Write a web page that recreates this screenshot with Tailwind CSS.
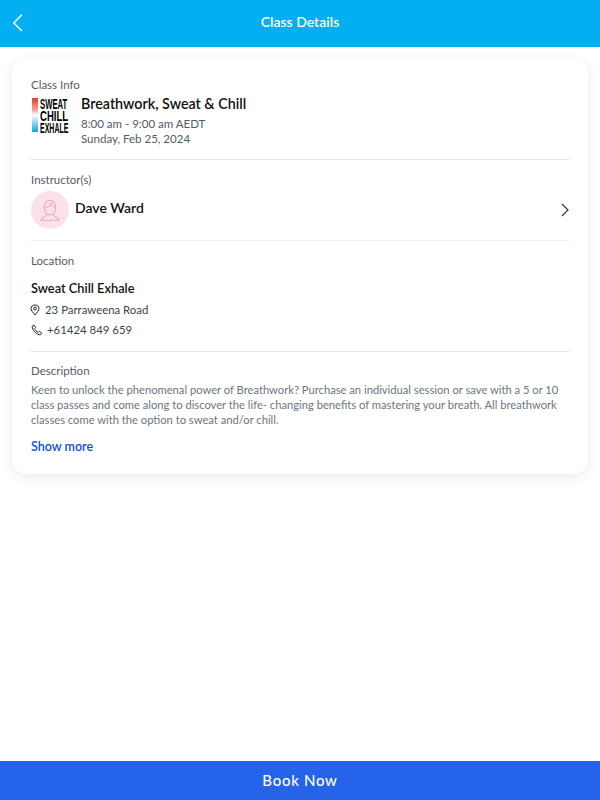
<!DOCTYPE html>
<html lang="en">
  <head>
    <meta charset="UTF-8" />
    <meta name="viewport" content="width=device-width, initial-scale=1.0" />
    <title>Class Details</title>
    <script src="https://cdn.jsdelivr.net/npm/@tailwindcss/browser@4"></script>
  </head>
  <body class="bg-white font-['Lato','Noto_Sans',sans-serif]">
    <div class="flex flex-col h-[800px] w-[600px] overflow-hidden">
      <!-- header -->
      <header class="h-[47px] shrink-0 bg-[#03aff0] flex items-center relative justify-center">
        <svg class="absolute left-[11px] top-[13px]" width="14" height="20" viewBox="0 0 14 20" fill="none" stroke="#fff" stroke-width="1.6" stroke-linecap="round" stroke-linejoin="round">
          <path d="M10.5 2 L2.8 10 L10.5 17.5" />
        </svg>
        <span class="text-white text-[14px] font-semibold leading-none mb-[3px]">Class Details</span>
      </header>

      <!-- card -->
      <main class="flex-1 px-[12px] pt-[13px]">
        <div class="bg-white rounded-[14px] shadow-[0_3px_14px_rgba(30,40,80,0.09)] h-[414px] px-[19px] pt-[17px]">
          <section class="h-[83px] border-b border-[#e3e3e3]">
            <p class="text-[11.5px] leading-[15px] text-[#555b66]">Class Info</p>
            <div class="flex mt-[5px]">
              <div class="w-[38px] h-[36px] flex shrink-0 mt-[1px]">
                <div class="w-[6px] h-[34px] ml-[1px] bg-[linear-gradient(180deg,#ee3b2a_0%,#f8a090_35%,#ffffff_50%,#9fdcf5_70%,#03a9e8_100%)]"></div>
                <div class="ml-[2px] w-[29px] text-black font-['Liberation_Sans',sans-serif] font-bold text-[14px] leading-[12px] whitespace-nowrap">
                  <div class="origin-left scale-x-[0.55]">SWEAT</div>
                  <div class="origin-left scale-x-[0.68]">CHILL</div>
                  <div class="origin-left scale-x-[0.5]">EXHALE</div>
                </div>
              </div>
              <div class="ml-[12px] mt-[-1px]">
                <p class="text-[14.3px] leading-[15px] font-semibold text-[#111]">Breathwork, Sweat &amp; Chill</p>
                <p class="text-[11.5px] leading-[16px] text-[#4f5b6b] mt-[5px]">8:00 am - 9:00 am AEDT</p>
                <p class="text-[11.5px] leading-[14px] text-[#4f5b6b]">Sunday, Feb 25, 2024</p>
              </div>
            </div>
          </section>

          <section class="h-[81px] border-b border-[#eeeeee] pt-[12px]">
            <p class="text-[11.5px] leading-[15px] text-[#555b66]">Instructor(s)</p>
            <div class="flex items-center mt-[4px]">
              <div class="w-[38px] h-[38px] rounded-full bg-[#fbe2ea] flex items-center justify-center">
                <svg width="24" height="24" viewBox="0 0 20 20" fill="none" stroke="#f4a6bd" stroke-width="0.85">
                  <path d="M6 11 C4 6 6.5 2 10 2 C13.5 2 16 6 14 11 C13 13 11.5 14 10 14 C8.5 14 7 13 6 11 Z" />
                  <path d="M6.5 8 C9 8 10.5 6 11 4.5 C11.5 6.5 12.5 7.5 14 8" />
                  <path d="M7.5 13.5 C7 15.5 4 15.5 2.5 18.5 H17.5 C16 15.5 13 15.5 12.5 13.5" />
                </svg>
              </div>
              <span class="ml-[6px] mb-[6px] text-[14px] font-semibold text-[#111]">Dave Ward</span>
              <svg class="ml-auto mr-[-1px] mb-[1px]" width="10" height="14" viewBox="0 0 10 14" fill="none" stroke="#2f3640" stroke-width="1.2">
                <path d="M2 1 L8 7 L2 13" />
              </svg>
            </div>
          </section>

          <section class="h-[111px] border-b border-[#e3e3e3] pt-[12px]">
            <p class="text-[11.5px] leading-[15px] text-[#555b66]">Location</p>
            <p class="text-[12.8px] leading-[15px] font-semibold text-[#111] mt-[13px]">Sweat Chill Exhale</p>
            <div class="flex items-center mt-[7px] h-[14px]">
              <svg width="10" height="12" viewBox="0 0 10 12" fill="none" stroke="#222" stroke-width="1" class="ml-[-1px] mr-[5px]">
                <path d="M5 11 C3 8.5 1 6.5 1 4.5 C1 2.3 2.8 1 5 1 C7.2 1 9 2.3 9 4.5 C9 6.5 7 8.5 5 11 Z" />
                <circle cx="5" cy="4.5" r="1.4" />
              </svg>
              <span class="text-[11.4px] text-[#3c4350]">23 Parraweena Road</span>
            </div>
            <div class="flex items-center mt-[6px] h-[14px]">
              <svg width="12" height="12" viewBox="0 0 12 12" fill="none" stroke="#222" stroke-width="1" class="mr-[4px]">
                <path d="M1.2 2.2 L2.8 1 L4.6 3.4 L3.6 4.6 C4.2 6 5.6 7.6 7.2 8.4 L8.4 7.4 L10.8 9.2 L9.6 10.8 C5.8 11 1 6.4 1.2 2.2 Z" />
              </svg>
              <span class="text-[11.4px] text-[#3c4350]">+61424 849 659</span>
            </div>
          </section>

          <section class="pt-[11px]">
            <p class="text-[11.5px] leading-[15px] text-[#555b66]">Description</p>
            <p class="text-[11.2px] leading-[15px] text-[#6b7683] mt-[4px]">Keen to unlock the phenomenal power of Breathwork? Purchase an individual session or save with a 5 or 10 class passes and come along to discover the life- changing benefits of mastering your breath. All breathwork classes come with the option to sweat and/or chill.</p>
            <p class="text-[12.5px] leading-[15px] font-semibold text-[#0a4fe8] mt-[12px]">Show more</p>
          </section>
        </div>
      </main>

      <!-- book button -->
      <button class="h-[39px] shrink-0 w-full bg-[#2563eb] text-white text-[15px] tracking-[0.7px] font-medium">Book Now</button>
    </div>
  </body>
</html>
